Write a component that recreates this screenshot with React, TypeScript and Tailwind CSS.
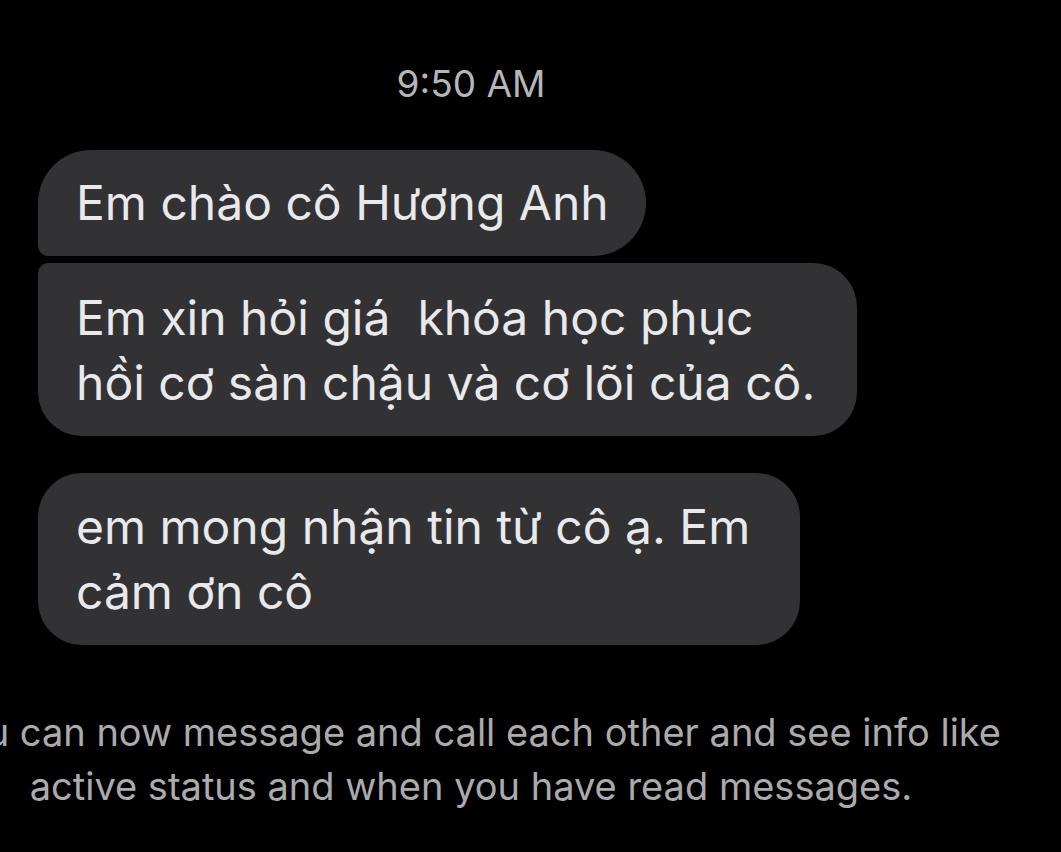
const font = { fontFamily: 'Inter, "Noto Sans", sans-serif' };

function Rim() {
  return <div className="w-[4px] h-[28px] rounded-r-full bg-[#c9d1d1] opacity-80" />;
}

export default function App() {
  return (
    <div className="h-[852px] w-[1061px] overflow-hidden bg-black text-[#e9e9eb]" style={font}>
      <div className="ml-[-59px] w-[1060px] flex flex-col">
        <div className="pt-[62px] text-center text-[37px] leading-[44px] text-[#b6b6b8]">9:50 AM</div>

        <div className="mt-[44px] flex flex-col gap-[7px] pl-[97px]">
          <div className="self-start h-[106px] flex items-center rounded-[53px] rounded-bl-[10px] bg-[#323234] pl-[38px] pr-[37px] text-[48px]">
            Em chào cô Hương Anh
          </div>
          <div className="flex items-end">
            <div className="ml-[-97px] mr-[93px] mb-[28px]"><Rim /></div>
            <div className="h-[173px] flex flex-col justify-center rounded-[44px] rounded-tl-[10px] bg-[#323234] pl-[38px] pr-[42px] text-[48px] leading-[65px]">
              <div>Em xin hỏi giá&nbsp; khóa học phục</div>
              <div>hồi cơ sàn chậu và cơ lõi của cô.</div>
            </div>
          </div>
        </div>

        <div className="mt-[37px] flex items-end pl-[97px]">
          <div className="ml-[-97px] mr-[93px] mb-[30px]"><Rim /></div>
          <div className="h-[172px] flex flex-col justify-center rounded-[44px] bg-[#323234] pl-[38px] pr-[50px] text-[48px] leading-[65px]">
            <div>em mong nhận tin từ cô ạ. Em</div>
            <div>cảm ơn cô</div>
          </div>
        </div>

        <div className="mt-[60px] text-center text-[38px] leading-[54px] text-[#ababad] whitespace-nowrap">
          You can now message and call each other and see info like
          <br />
          active status and when you have read messages.
        </div>
      </div>
    </div>
  );
}
